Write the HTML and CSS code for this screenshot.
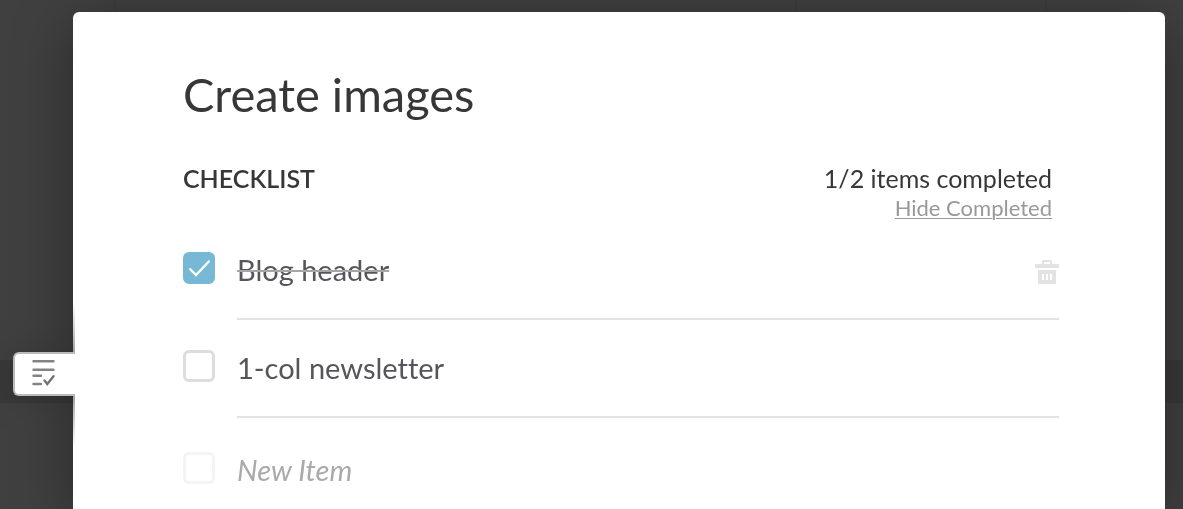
FILE: index.html
```html
<!DOCTYPE html>
<html lang="en">
<head>
<meta charset="utf-8">
<meta name="viewport" content="width=device-width, initial-scale=1">
<title>Create images</title>
<link rel="stylesheet" href="styles.css">
</head>
<body>
<div class="backdrop"><div class="backdrop-band"></div></div>
<main class="card">
  <button class="tab" type="button" aria-label="Checklist">
    <svg width="24" height="28" viewBox="0 0 24 28" fill="none" stroke="#838383" stroke-width="2.4" stroke-linecap="round">
      <path d="M1.500 1.300H21.500M1.500 9.700H21.500M1.500 15.700H9M1.500 24H9"/>
      <path d="M12.500 20.500L15.300 24L21.500 16.200" stroke="#747474"/>
    </svg>
  </button>
  <h1 class="title">Create images</h1>
  <header class="summary">
    <h2 class="heading">CHECKLIST</h2>
    <div class="progress">
      <span class="count">1/2 items completed</span>
      <a class="toggle" href="#">Hide Completed</a>
    </div>
  </header>
  <ul class="list">
    <li class="item">
      <input class="check" type="checkbox" id="blog" checked>
      <svg class="tick" width="32" height="32" viewBox="0 0 32 32" fill="none" stroke="#fff" stroke-width="2.300"><path d="M6.500 16.500L13 23L26.500 8.800"/></svg>
      <div class="body">
        <label class="label done" for="blog">Blog header</label>
        <button class="remove" type="button" aria-label="Delete item">
          <svg width="24" height="24" viewBox="0 0 24 24" fill="#e3e3e3">
            <path fill-rule="evenodd" d="M7 4V1.500Q7 0 8.500 0H15.500Q17 0 17 1.500V4H23Q24 4 24 5V8H0V5Q0 4 1 4ZM9 2V4H15V2Z"/>
            <path fill-rule="evenodd" d="M3 10H21V23Q21 24 20 24H4Q3 24 3 23ZM7 14V20H9V14ZM11 14V20H13V14ZM15 14V20H17V14Z"/>
          </svg>
        </button>
      </div>
    </li>
    <li class="item">
      <input class="check" type="checkbox" id="newsletter">
      <div class="body"><label class="label" for="newsletter">1-col newsletter</label></div>
    </li>
    <li class="item item-new">
      <input class="check check-new" type="checkbox" aria-label="New item completed" disabled>
      <input class="new-text" type="text" placeholder="New Item" aria-label="New item">
    </li>
  </ul>
</main>
</body>
</html>
```
FILE: styles.css
```css
* { box-sizing: border-box; }
body {
  display: flex;
  min-height: 100vh;
  margin: 0;
  padding: 12px 18px 0 73px;
  background: #404040;
  font-family: "Lato", "Liberation Sans", sans-serif;
  font-variant-ligatures: none;
  color: #373737;
}
.backdrop {
  position: fixed;
  inset: 0;
  z-index: -1;
  background: linear-gradient(90deg, transparent 114px, #3d3d3d 114px 116px, transparent 116px 795px, #3d3d3d 795px 797px, transparent 797px 1045px, #3d3d3d 1045px 1047px, transparent 1047px);
}
.backdrop-band {
  position: absolute;
  top: 360px;
  width: 100%;
  height: 43px;
  background: #393939;
}
.card {
  position: relative;
  flex: 1;
  padding: 54px 106px 0 110px;
  border-radius: 6px 6px 0 0;
  background: #fff;
  box-shadow: 0 12px 60px rgba(0, 0, 0, 0.36);
}
.card::before {
  content: "";
  position: absolute;
  left: 0;
  top: 290px;
  width: 2px;
  height: 145px;
  background: linear-gradient(transparent, #a0a0a0 38%, #a0a0a0 62%, transparent);
}
.tab {
  position: absolute;
  left: -60px;
  top: 340px;
  display: flex;
  align-items: center;
  width: 62px;
  height: 44px;
  padding: 0 0 0 17px;
  border: 2px solid #bbb;
  border-right: 0;
  border-radius: 6px 0 0 6px;
  background: #fff;
  box-shadow: -6px 0 40px rgba(0, 0, 0, 0.15);
  clip-path: inset(-60px 0 -60px -60px);
}
.title {
  margin: 0;
  font-size: 47px;
  line-height: 56px;
  font-weight: 400;
}
.summary {
  display: flex;
  justify-content: space-between;
  margin-top: 40px;
  padding-right: 7px;
}
.heading {
  margin: 0;
  font-size: 25px;
  line-height: 32px;
  font-weight: 600;
}
.progress {
  display: flex;
  flex-direction: column;
  align-items: flex-end;
}
.count { font-size: 25px; line-height: 32px; }
.toggle {
  font-size: 22px;
  line-height: 28px;
  color: #999;
  text-decoration-thickness: 1px;
  text-underline-offset: 2px;
}
.list {
  margin: 30px 0 0;
  padding: 0;
  list-style: none;
}
.item {
  position: relative;
  display: grid;
  grid-template-columns: 32px 1fr;
  column-gap: 22px;
  margin-bottom: 30px;
}
.check {
  appearance: none;
  width: 32px;
  height: 32px;
  margin: 0;
  border: 3px solid #ddd;
  border-radius: 6px;
  background: #fff;
}
.check:checked { border-color: #77b9d4; background: #77b9d4; }
.check-new { border-color: #f4f4f4; }
.tick {
  position: absolute;
  left: 0;
  top: 0;
  pointer-events: none;
}
.body {
  display: flex;
  align-items: flex-start;
  justify-content: space-between;
  height: 68px;
  border-bottom: 2px solid #e3e3e3;
}
.label {
  font-size: 29px;
  line-height: 36px;
  color: #54565b;
}
.done { text-decoration: line-through #a6a6a6 2px; }
.remove {
  display: flex;
  margin: 8px 0 0;
  padding: 0;
  border: 0;
  background: none;
}
.item-new { margin: 34px 0 0; }
.new-text {
  width: 100%;
  height: 34px;
  padding: 0;
  border: 0;
  outline: 0;
  background: none;
  font: italic 29px "Lato", "Liberation Sans", sans-serif;
}
.new-text::placeholder { color: #aaa; opacity: 1; }
```
